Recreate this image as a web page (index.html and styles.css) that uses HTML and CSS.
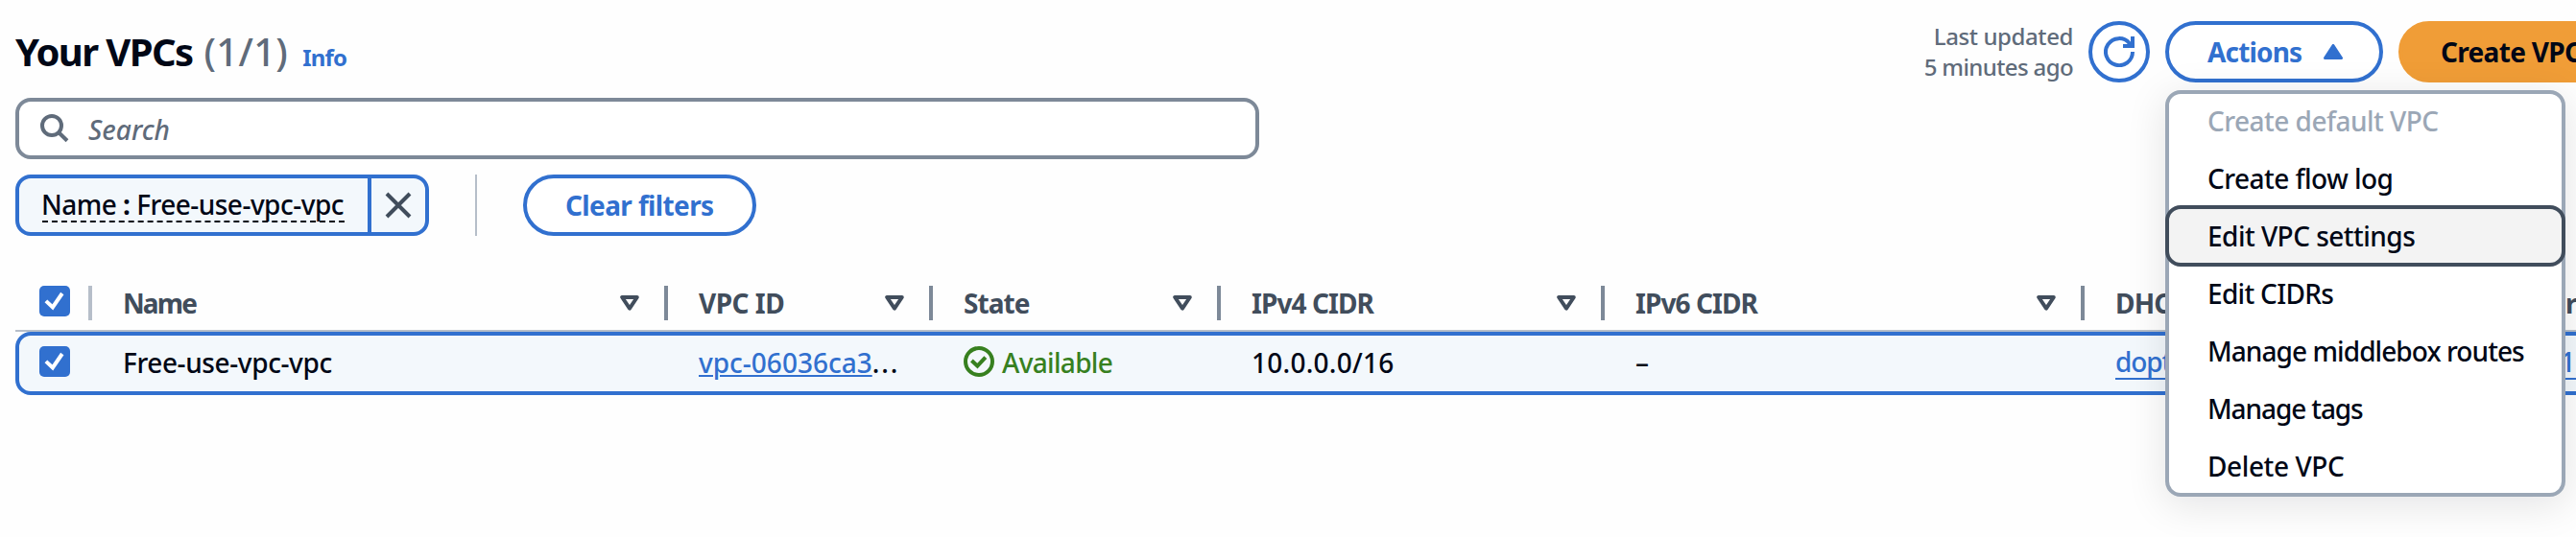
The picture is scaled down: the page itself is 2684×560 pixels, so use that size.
FILE: index.html
```html
<!DOCTYPE html>
<html lang="en">
<head>
<meta charset="utf-8">
<title>Your VPCs</title>
<link rel="stylesheet" href="styles.css">
</head>
<body>
<svg class="defs" width="0" height="0" aria-hidden="true">
  <symbol id="sort" viewBox="0 0 20 16"><path d="M2.2 2h15.6L10 13.6z" fill="none" stroke="currentColor" stroke-width="4" stroke-linejoin="round"/></symbol>
  <symbol id="tick" viewBox="0 0 32 32"><path d="M6.9 15.9l7 6.6L23.8 8" fill="none" stroke="#fff" stroke-width="4"/></symbol>
</svg>
<main class="page">
  <header class="header">
    <h1 class="title"><span class="title-name">Your VPCs</span><span class="counter">(1/1)</span></h1>
    <a class="info">Info</a>
    <div class="toolbar">
      <p class="updated"><span class="tr-4">Last updated</span><br><span class="tr-6">5 minutes ago</span></p>
      <button class="btn btn-icon" aria-label="Refresh"><svg width="32" height="32" viewBox="0 0 16 16"><path d="M10 5h5V0M15 8a7 7 0 1 1-1.6-4.4L15 5.3" fill="none" stroke="currentColor" stroke-width="2"/></svg></button>
      <div class="dropdown">
        <button class="btn btn-actions"><span class="label tr-8">Actions</span><svg width="20" height="16" viewBox="0 0 20 16"><path d="M10 1.5L18.5 14.5h-17z" fill="currentColor" stroke="currentColor" stroke-width="3" stroke-linejoin="round"/></svg></button>
        <ul class="menu">
          <li class="item disabled tr-5">Create default VPC</li>
          <li class="item tr-5">Create flow log</li>
          <li class="item active tr-5">Edit VPC settings</li>
          <li class="item tr-7">Edit CIDRs</li>
          <li class="item tr-9">Manage middlebox routes</li>
          <li class="item tr-11">Manage tags</li>
          <li class="item tr-4">Delete VPC</li>
        </ul>
      </div>
      <button class="btn btn-primary"><span class="label tr-7">Create VPC</span></button>
    </div>
  </header>

  <div class="search">
    <svg width="30" height="30" viewBox="0 0 30 30"><circle cx="12" cy="12" r="10" fill="none" stroke="currentColor" stroke-width="4"/><path d="M19 19l9 8.7" stroke="currentColor" stroke-width="4"/></svg>
    <span class="placeholder">Search</span>
  </div>

  <div class="filters">
    <div class="token">
      <span class="token-text tr-5">Name <b>:</b> Free-use-vpc-vpc</span>
      <span class="token-close"><svg width="28" height="28" viewBox="0 0 28 28"><path d="M2 2l24 24M26 2L2 26" stroke="currentColor" stroke-width="4"/></svg></span>
    </div>
    <span class="divider"></span>
    <button class="btn"><span class="label tr-6">Clear filters</span></button>
  </div>

  <section class="table">
    <div class="row head">
      <div class="cell check"><span class="checkbox"><svg width="32" height="32"><use href="#tick"/></svg></span></div>
      <div class="cell"><span class="name tr-19">Name</span><svg class="sort" width="20" height="16"><use href="#sort"/></svg></div>
      <div class="cell"><span class="name tr-5">VPC ID</span><svg class="sort" width="20" height="16"><use href="#sort"/></svg></div>
      <div class="cell"><span class="name tr-9">State</span><svg class="sort" width="20" height="16"><use href="#sort"/></svg></div>
      <div class="cell"><span class="name tr-9">IPv4 CIDR</span><svg class="sort" width="20" height="16"><use href="#sort"/></svg></div>
      <div class="cell"><span class="name tr-9">IPv6 CIDR</span><svg class="sort" width="20" height="16"><use href="#sort"/></svg></div>
      <div class="cell"><span class="name tr-8">DHCP option set</span></div>
      <div class="cell"><span class="name tr-8">Main route table</span></div>
    </div>
    <div class="row selected">
      <div class="cell check"><span class="checkbox"><svg width="32" height="32"><use href="#tick"/></svg></span></div>
      <div class="cell"><span class="tr-4">Free-use-vpc-vpc</span></div>
      <div class="cell"><a class="link">vpc-06036ca3</a><span class="ellipsis">...</span></div>
      <div class="cell status"><svg width="32" height="32" viewBox="0 0 32 32"><circle cx="16" cy="16" r="14" fill="none" stroke="currentColor" stroke-width="4"/><path d="M8.4 15l6 5.6 8.4-9" fill="none" stroke="currentColor" stroke-width="4"/></svg><span class="tr-7">Available</span></div>
      <div class="cell"><span class="cidr">10.0.0.0/16</span></div>
      <div class="cell"><span>–</span></div>
      <div class="cell"><a class="link-block tr-11">dopt-0</a></div>
      <div class="cell"><a class="link-block route">rtb-01</a></div>
    </div>
  </section>
</main>
</body>
</html>
```
FILE: styles.css
```css
* { box-sizing: border-box; }
body {
  margin: 0;
  background: #fefefe;
  color: #000716;
  font: 500 28px/36px "Noto Sans", "Open Sans", sans-serif;
  overflow: hidden;
}
svg { display: block; flex: none; }
.defs { position: absolute; }
.page {
  width: 2684px;
  height: 560px;
  padding: 22px 0 0 16px;
  overflow: hidden;
  white-space: nowrap;
}

/* letter tracking, in tenths of a pixel */
.tr-4 { letter-spacing: -0.4px; }
.tr-5 { letter-spacing: -0.52px; }
.tr-6 { letter-spacing: -0.62px; }
.tr-7 { letter-spacing: -0.68px; }
.tr-8 { letter-spacing: -0.83px; }
.tr-9 { letter-spacing: -0.93px; }
.tr-11 { letter-spacing: -1.1px; }
.tr-19 { letter-spacing: -1.9px; }

/* header */
.header { display: flex; align-items: baseline; width: 2719px; height: 64px; }
.title { display: flex; gap: 12px; margin: 0; font-size: 40px; line-height: 64px; }
.title-name { letter-spacing: -1.6px; }
.counter { color: #5f6b7a; font-weight: 500; letter-spacing: 0.3px; }
.info { margin-left: 15px; color: #3170cf; font-size: 24px; font-weight: 700; letter-spacing: -0.8px; }
.toolbar { display: flex; align-self: stretch; gap: 16px; margin-left: auto; }
.updated { margin: 0; color: #5f6b7a; font-size: 24px; line-height: 32px; text-align: right; }

/* buttons */
.btn {
  display: flex;
  align-items: center;
  height: 64px;
  padding: 0 40px;
  border: 4px solid #3170cf;
  border-radius: 32px;
  background: #fff;
  color: #3170cf;
  font: 700 28px/36px "Noto Sans", "Open Sans", sans-serif;
}
.btn-icon { width: 64px; padding: 0; justify-content: center; }
.btn-actions { width: 227px; justify-content: space-between; padding-right: 38px; }
.btn-primary { width: 236px; border-color: #f09d37; background: #f09d37; color: #000716; }

/* actions menu */
.dropdown { position: relative; z-index: 1; }
.menu {
  position: absolute;
  top: 72px;
  left: 0;
  width: 417px;
  height: 424px;
  margin: 0;
  padding: 0;
  border: 4px solid #9ba7b6;
  border-radius: 16px;
  background: #fff;
  box-shadow: 0 8px 40px 2px rgba(0, 7, 22, 0.1);
  list-style: none;
}
.item {
  height: 64px;
  margin: -4px -4px 0;
  padding: 10px 40px;
  border: 4px solid transparent;
  border-radius: 16px;
}
.disabled { color: #9ba7b6; }
.active { border-color: #414d5c; background: #f3f3f3; }

/* search and filters */
.search {
  display: flex;
  align-items: center;
  width: 1296px;
  height: 64px;
  margin-top: 16px;
  padding-left: 22px;
  border: 4px solid #7d8998;
  border-radius: 16px;
  background: #fff;
  color: #5f6b7a;
}
.placeholder { margin-left: 20px; padding-top: 1px; font-style: italic; }
.filters { display: flex; height: 64px; margin-top: 16px; }
.token {
  display: flex;
  width: 431px;
  border: 4px solid #3170cf;
  border-radius: 16px;
  background: #f3f8fc;
}
.token-text {
  height: 36px;
  width: 315px;
  margin: 10px 24px 0;
  border-bottom: 2px dashed #000716;
  line-height: 35px;
  text-indent: -1px;
}
.token-close {
  display: flex;
  flex: 1;
  align-items: center;
  justify-content: center;
  border-left: 4px solid #3170cf;
  color: #414d5c;
}
.divider { width: 2px; margin: 0 48px; background: #b6bec9; }

/* table */
.table { width: 2840px; margin-top: 52px; }
.row {
  display: grid;
  grid-template-columns: 80px 600px 276px 300px 400px 500px 396px 1fr;
}
.cell { display: flex; align-items: center; padding-left: 32px; }
.head { height: 48px; border-bottom: 2px solid #b6bec9; color: #414d5c; font-weight: 700; }
.head .cell { height: 36px; border-right: 4px solid #7d8998; }
.head .check { border-color: #b6bec9; padding: 0 0 4px 25px; }
.sort { margin: 0 26px 0 auto; }
.checkbox { border-radius: 5px; background: #3170cf; }
.selected {
  height: 66px;
  padding-bottom: 4px;
  border: 4px solid #3170cf;
  border-radius: 16px;
  background: #f3f8fc;
  grid-template-columns: 76px 600px 276px 300px 400px 500px 396px 1fr;
}
.selected .cell > :not(svg):not(.checkbox) { padding-top: 1px; }
.selected .check { padding-left: 21px; }
.link {
  color: #3170cf;
  text-decoration: underline 2px;
  text-underline-offset: 2px;
}
.ellipsis { letter-spacing: 1.9px; }
.link-block { height: 36px; margin-top: 2px; border-bottom: 2px solid #3170cf; color: #3170cf; line-height: 32px; }
.route { letter-spacing: 0.5px; padding-right: 8px; }
.status { gap: 8px; color: #37801f; }
.cidr { letter-spacing: 0.25px; }
```
